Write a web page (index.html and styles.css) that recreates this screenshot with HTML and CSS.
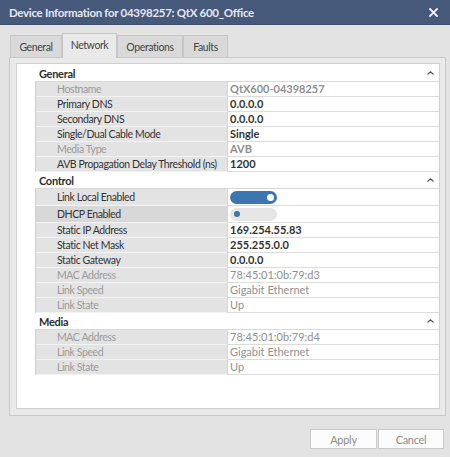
FILE: index.html
```html
<!DOCTYPE html>
<html>
<head>
<meta charset="utf-8">
<link rel="stylesheet" href="styles.css">
</head>
<body>
<div class="titlebar">
  <span class="title">Device Information for 04398257: QtX 600_Office</span>
  <svg class="close" viewBox="0 0 9 9" width="9" height="9"><path d="M1 1L8 8M8 1L1 8" stroke="#f2f4f8" stroke-width="1.8" stroke-linecap="square"/></svg>
</div>
<div class="tabs">
  <div class="tab w-general">General</div>
  <div class="tab active w-network">Network</div>
  <div class="tab w-ops">Operations</div>
  <div class="tab w-faults">Faults</div>
</div>
<div class="panel">
  <div class="sheet">
    <div class="sec-head"><span>General</span><svg class="caret" viewBox="0 0 7 4" width="7" height="4"><path d="M0.5 3.5L3.5 0.8L6.5 3.5" fill="none" stroke="#555" stroke-width="1.1"/></svg></div>
    <div class="grid">
      <div class="row"><div class="lbl ro">Hostname</div><div class="val ro b">QtX600-04398257</div></div>
      <div class="row"><div class="lbl">Primary DNS</div><div class="val b">0.0.0.0</div></div>
      <div class="row"><div class="lbl">Secondary DNS</div><div class="val b">0.0.0.0</div></div>
      <div class="row"><div class="lbl">Single/Dual Cable Mode</div><div class="val b">Single</div></div>
      <div class="row"><div class="lbl ro">Media Type</div><div class="val ro b">AVB</div></div>
      <div class="row"><div class="lbl">AVB Propagation Delay Threshold (ns)</div><div class="val b">1200</div></div>
    </div>
    <div class="sec-head"><span>Control</span><svg class="caret" viewBox="0 0 7 4" width="7" height="4"><path d="M0.5 3.5L3.5 0.8L6.5 3.5" fill="none" stroke="#555" stroke-width="1.1"/></svg></div>
    <div class="grid">
      <div class="row tall"><div class="lbl">Link Local Enabled</div><div class="val"><span class="toggle on"><span class="knob"></span></span></div></div>
      <div class="row tall"><div class="lbl sel">DHCP Enabled</div><div class="val"><span class="toggle off"><span class="knob"></span></span></div></div>
      <div class="row"><div class="lbl">Static IP Address</div><div class="val b">169.254.55.83</div></div>
      <div class="row"><div class="lbl">Static Net Mask</div><div class="val b">255.255.0.0</div></div>
      <div class="row"><div class="lbl">Static Gateway</div><div class="val b">0.0.0.0</div></div>
      <div class="row"><div class="lbl ro">MAC Address</div><div class="val ro">78:45:01:0b:79:d3</div></div>
      <div class="row"><div class="lbl ro">Link Speed</div><div class="val ro">Gigabit Ethernet</div></div>
      <div class="row"><div class="lbl ro">Link State</div><div class="val ro">Up</div></div>
    </div>
    <div class="sec-head"><span>Media</span><svg class="caret" viewBox="0 0 7 4" width="7" height="4"><path d="M0.5 3.5L3.5 0.8L6.5 3.5" fill="none" stroke="#555" stroke-width="1.1"/></svg></div>
    <div class="grid">
      <div class="row"><div class="lbl ro">MAC Address</div><div class="val ro">78:45:01:0b:79:d4</div></div>
      <div class="row"><div class="lbl ro">Link Speed</div><div class="val ro">Gigabit Ethernet</div></div>
      <div class="row"><div class="lbl ro">Link State</div><div class="val ro">Up</div></div>
    </div>
  </div>
</div>
<div class="footer">
  <button class="btn w-apply">Apply</button>
  <button class="btn w-cancel">Cancel</button>
</div>
</body>
</html>
```
FILE: styles.css
```css
* { box-sizing: border-box; }
html, body { margin: 0; padding: 0; }
body {
  width: 450px;
  height: 457px;
  overflow: hidden;
  background: #e3e3e3;
  font-family: Lato, "Liberation Sans", sans-serif;
  font-size: 11px;
  letter-spacing: -0.3px;
  color: #333;
}
.titlebar {
  height: 25px;
  background: #46597a;
  border-bottom: 1px solid #3d4f6c;
  display: flex;
  align-items: center;
  justify-content: space-between;
  padding: 0 12px 0 9px;
}
.title {
  color: #e2e7ef;
  font-weight: 700;
  font-size: 11.5px;
}
.close { display: block; }
.tabs {
  display: flex;
  align-items: flex-end;
  height: 32px;
  padding-left: 10px;
  position: relative;
  z-index: 1;
}
.tab {
  height: 22px;
  border: 1px solid #c6c6c6;
  border-bottom: none;
  background: #d9d9d9;
  display: flex;
  align-items: center;
  justify-content: center;
  color: #444;
  font-size: 10.5px;
  letter-spacing: -0.4px;
}
.tab.active {
  height: 25px;
  padding-bottom: 2px;
  background: #e9e9e9;
  margin-bottom: -1px;
}
.w-general { width: 52px; }
.w-network { width: 55px; }
.w-ops { width: 66px; }
.w-faults { width: 45px; }
.panel {
  margin: 0 4px 0 9px;
  height: 359px;
  border: 1px solid #c8c8c8;
  background: #e9e9e9;
  padding: 5px 5px 6px 6px;
}
.sheet {
  height: 100%;
  background: #fff;
  border: 1px solid #cfcfcf;
  padding-top: 1px;
}
.sec-head {
  height: 16px;
  display: flex;
  align-items: center;
  justify-content: space-between;
  padding: 0 5px 0 22px;
  font-weight: 700;
  color: #2e2e2e;
}
.caret { display: block; }
.grid {
  margin-left: 18px;
  border-top: 1px solid #d8d8d8;
  border-left: 1px solid #d0d0d0;
}
.row {
  display: grid;
  grid-template-columns: 191px 1fr;
  height: 15px;
}
.row.tall { height: 17px; }
.lbl {
  background: #e3e3e3;
  border-bottom: 1px solid #f3f3f3;
  padding-left: 21px;
  line-height: 14px;
  color: #333;
  white-space: nowrap;
  font-size: 10.5px;
  letter-spacing: -0.4px;
  display: flex;
  align-items: center;
}
.lbl.sel { background: #d8d8d8; }
.val {
  border-left: 1px solid #d6d6d6;
  border-bottom: 1px solid #dcdcdc;
  padding-left: 2px;
  line-height: 14px;
  color: #333;
  display: flex;
  align-items: center;
  white-space: nowrap;
  letter-spacing: 0;
}
.b { font-weight: 700; }
.ro { color: #8f8f8f; }
.lbl.ro { color: #9a9a9a; }
.toggle {
  display: block;
  width: 47px;
  height: 13px;
  border-radius: 7px;
  position: relative;
}
.toggle.on { background: #3c76b0; }
.toggle.off { background: #e6e6e6; }
.knob {
  position: absolute;
  border-radius: 50%;
}
.on .knob { right: 3px; top: 3px; width: 7px; height: 7px; background: #fff; }
.off .knob { left: 4px; top: 3.5px; width: 6px; height: 6px; background: #3c76b0; }
.footer {
  display: flex;
  justify-content: flex-end;
  gap: 1px;
  padding: 13px 6px 0 0;
}
.btn {
  height: 20px;
  background: #fcfcfc;
  border: 1px solid #c9c9c9;
  color: #8c8c8c;
  font: inherit;
  letter-spacing: inherit;
  padding: 0;
}
.w-apply { width: 67px; }
.w-cancel { width: 66px; }
```
